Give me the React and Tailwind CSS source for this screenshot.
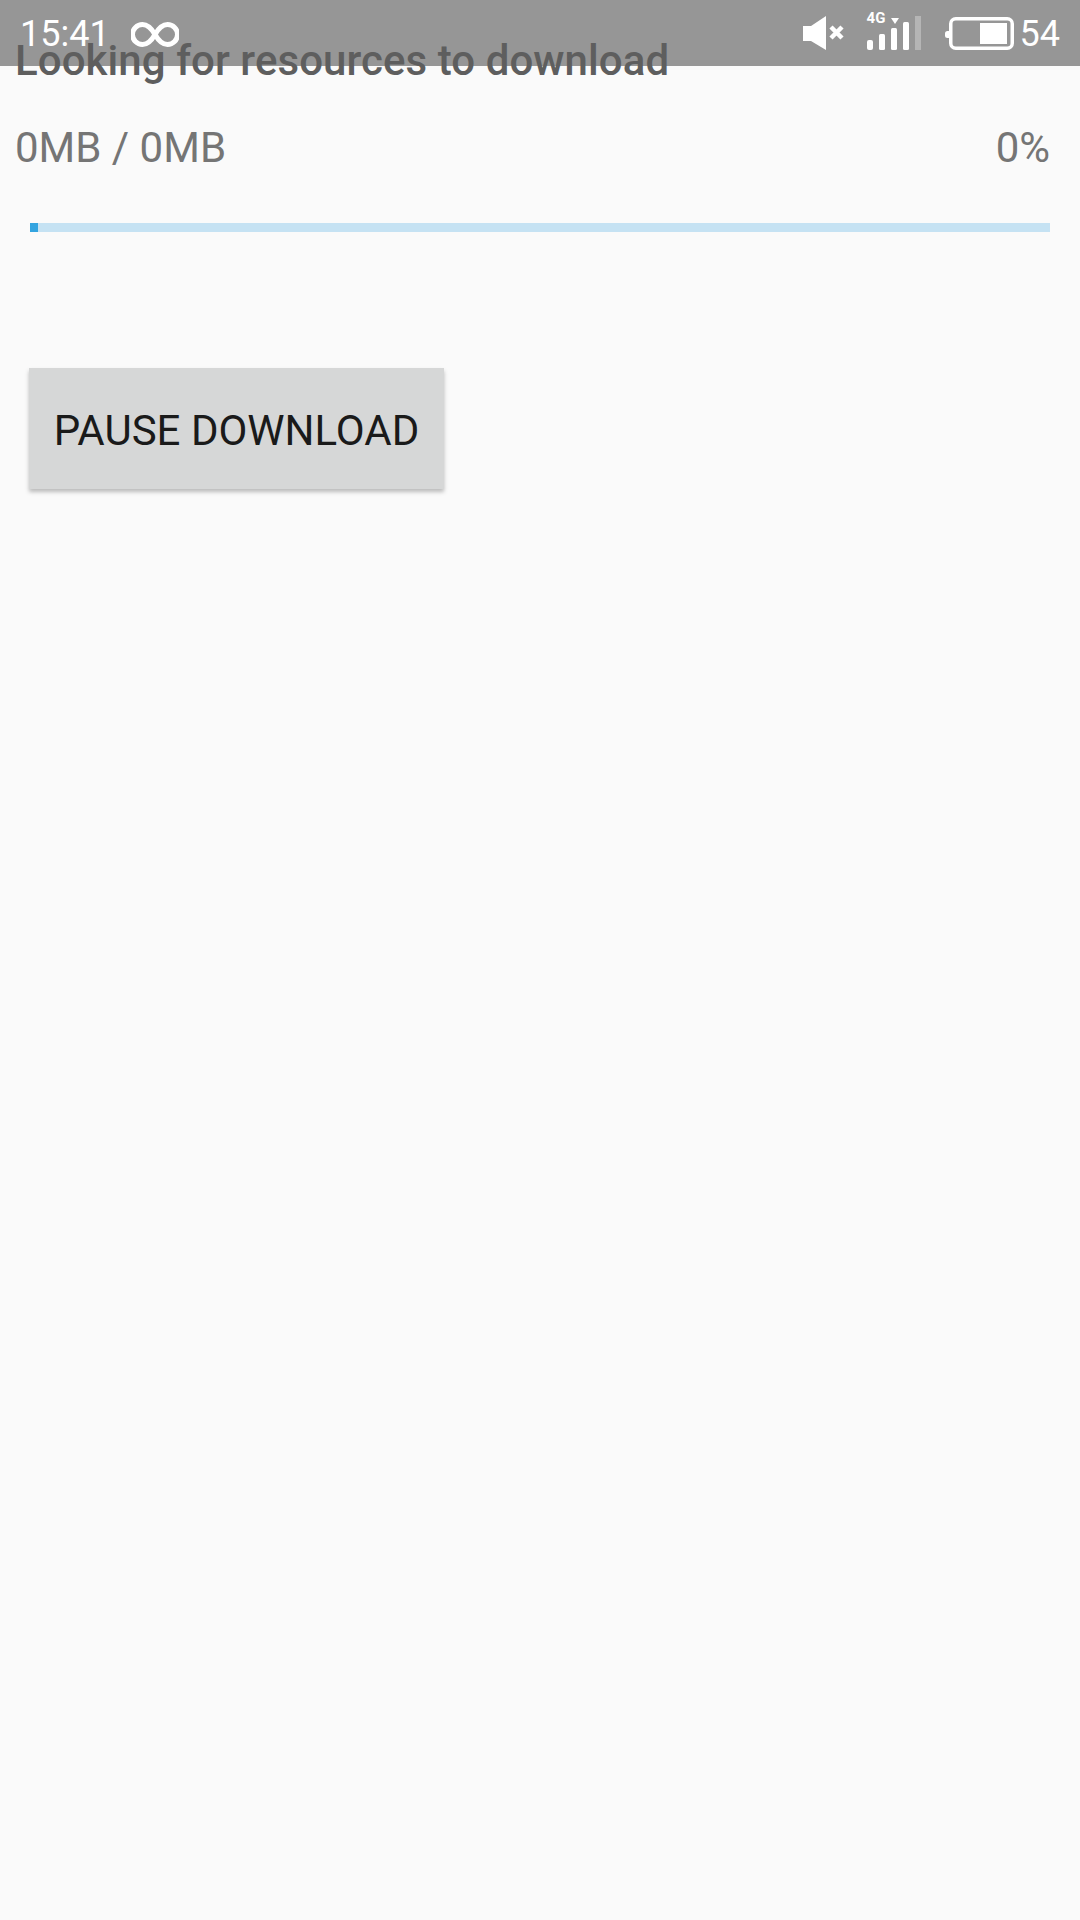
export default function App() {
  return (
    <div className="relative h-[1920px] w-[1080px] overflow-hidden bg-[#fafafa] font-['Roboto',sans-serif]">
      <div className="flex flex-col pl-[15px] pr-[30px] pt-[36px]">
        <div className="relative z-10 h-[50px] whitespace-nowrap text-[42px] font-medium leading-[50px] tracking-[0.07px] text-[#5e5e5e]">Looking for resources to download</div>
        <div className="mt-[33px] flex h-[58px] items-center justify-between text-[42px] leading-[58px] text-[#757575]">
          <span>0MB / 0MB</span>
          <span>0%</span>
        </div>
        <div className="mt-[46px] ml-[15px] h-[9px] bg-[#c5e2f3]">
          <div className="h-full w-[8px] bg-[#33a4e0]" />
        </div>
        <div className="mt-[136px] ml-[14px] flex h-[121px] w-[415px] items-center justify-center bg-[#d6d7d7] pt-[4px] text-[42px] text-[#1a1a1a] shadow-[0_3px_4px_rgba(0,0,0,0.25)]">
          PAUSE DOWNLOAD
        </div>
      </div>
      <div className="absolute left-0 top-0 flex h-[66px] w-[1080px] items-center justify-between bg-[rgba(0,0,0,0.4)] pl-[20px] pr-[20px] text-white">
        <div className="flex items-center gap-[21px] pt-[3px]">
          <span className="text-[36px] leading-[63px]">15:41</span>
          <svg width="48" height="25" viewBox="0 0 48 25" fill="none" stroke="white" strokeWidth="5">
            <path d="M24 12.5C20 5.5 16 2.5 11.5 2.5a10 10 0 0 0 0 20C16 22.5 20 19.5 24 12.5C28 5.5 32 2.5 36.5 2.5a10 10 0 0 1 0 20C32 22.5 28 19.5 24 12.5Z" />
          </svg>
        </div>
        <div className="flex items-center">
          <svg width="46" height="34" viewBox="0 0 46 34" fill="white">
            <path d="M0 10h8L23 0v34L8 25H0Z" />
            <path d="M28 11l11 11m0-11l-11 11" stroke="white" strokeWidth="4.5" fill="none" />
          </svg>
          <div className="relative ml-[18px] h-[34px] w-[54px]">
            <svg width="54" height="34" viewBox="0 0 54 34" fill="white">
              <rect x="0" y="24" width="6" height="10" rx="2" />
              <rect x="12" y="18" width="6" height="16" rx="1.5" />
              <rect x="24" y="12" width="6" height="22" rx="1.5" />
              <rect x="36" y="6" width="6" height="28" rx="1.5" />
              <rect x="48" y="0" width="6" height="34" fill="#b5b5b5" />
              <path d="M24 2h8l-4 6Z" />
            </svg>
            <span className="absolute -top-[7px] left-0 text-[15px] font-bold leading-[18px] text-white">4G</span>
          </div>
          <svg className="ml-[24px]" width="69" height="33" viewBox="0 0 69 33">
            <rect x="0" y="14" width="6" height="7" rx="2.5" fill="white" />
            <rect x="5.75" y="1.75" width="61.5" height="29.5" rx="5" fill="none" stroke="white" strokeWidth="3.5" />
            <rect x="35" y="6" width="27" height="21" fill="white" />
          </svg>
          <span className="ml-[6px] pt-[3px] text-[36px] leading-[63px]">54</span>
        </div>
      </div>
    </div>
  );
}
